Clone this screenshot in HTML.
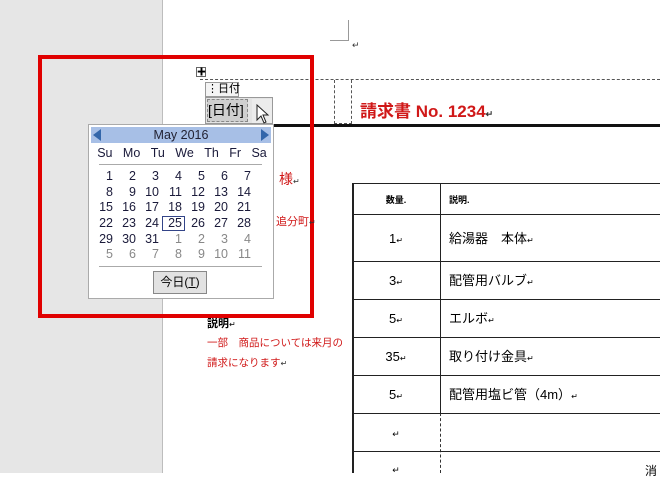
<!DOCTYPE html>
<html><head><meta charset="utf-8"><style>
*{margin:0;padding:0;box-sizing:border-box}
body{width:660px;height:473px;overflow:hidden;background:#fff;position:relative;font-family:"Liberation Sans","Noto Sans CJK JP",sans-serif}
.a{position:absolute}
.red{color:#d01818}
.cal td{width:23px;text-align:right;padding-right:3px;height:15.6px;font-size:12.5px;color:#1a1a3a;line-height:15px}
.cal .g{color:#888}
.row{position:absolute;left:352px;width:320px;border-top:1.5px solid #222}
.q{position:absolute;left:352px;width:88px;text-align:center;font-size:13px;line-height:16px}
.d{position:absolute;left:449px;font-size:13px;line-height:16px}
</style></head><body>
<div class="a" style="left:0;top:0;width:163px;height:473px;background:#e6e6e6;border-right:1px solid #bdbdbd"></div>
<div class="a" style="left:330px;top:20px;width:19px;height:21px;border-right:1px solid #999;border-bottom:1px solid #999"></div>
<div class="a" style="left:352px;top:40px;font-size:9px;color:#333">↵</div>
<div class="a" style="left:200px;top:79px;width:460px;border-top:1px dashed #555"></div>
<div class="a" style="left:334px;top:80px;width:18px;height:44px;border-left:1px dashed #555;border-right:1px dashed #555;border-bottom:1px dashed #555"></div>
<div class="a" style="left:273px;top:124px;width:387px;height:3px;background:#111"></div>
<div class="a red" style="left:360px;top:97px;font-size:17px;font-weight:bold">請求書 No. 1234<span style="font-size:9px;color:#333">↵</span></div>
<div class="a" style="left:196px;top:67px;width:10px;height:10px;border:1px solid #666;font-size:9px;line-height:8px;text-align:center">✚</div>
<div class="a" style="left:205px;top:82px;width:34px;height:15px;border:1px solid #999;background:#f4f4f4;font-size:11px;line-height:13px;padding-left:1px;white-space:nowrap;overflow:visible">⋮日付</div>
<div class="a" style="left:205px;top:97px;width:68px;height:27px;border:1px solid #999;background:#e4e4e4"></div>
<div class="a" style="left:207px;top:99px;width:41px;height:23px;background:#cfcfcf;border:1px dashed #888;font-size:14px;line-height:21px;white-space:nowrap">[日付]</div>
<div class="a" style="left:252px;top:99px;width:20px;height:24px;background:#ececec"></div>
<svg class="a" style="left:256px;top:104px" width="16" height="22"><path d="M1 1 L1 16 L5 12 L8 19 L10 18 L7 11 L12 11 Z" fill="#fff" stroke="#222"/></svg>
<div class="a" style="left:38px;top:55px;width:276px;height:263px;border:4px solid #e00000"></div>
<div class="a" style="left:88px;top:124px;width:186px;height:175px;background:#fff;border:1px solid #aaa"></div>
<div class="a" style="left:91px;top:127px;width:180px;height:16px;background:#a7bfe6;font-size:12.5px;text-align:center;line-height:16px;color:#223">May 2016</div>
<svg class="a" style="left:93px;top:129px" width="180" height="12"><path d="M0 6 L8 0 L8 12Z" fill="#3366aa"/><path d="M176 6 L168 0 L168 12Z" fill="#3366aa"/></svg>
<div class="a" style="left:92px;top:146px;width:180px;font-size:12.5px;color:#1a1a3a;display:flex;justify-content:space-around">
<span>Su</span><span>Mo</span><span>Tu</span><span>We</span><span>Th</span><span>Fr</span><span>Sa</span></div>
<div class="a" style="left:99px;top:164px;width:163px;border-top:1px solid #aaa"></div>
<table class="a cal" style="left:93px;top:169px;border-collapse:collapse">
<tr><td>1</td><td>2</td><td>3</td><td>4</td><td>5</td><td>6</td><td>7</td></tr>
<tr><td>8</td><td>9</td><td>10</td><td>11</td><td>12</td><td>13</td><td>14</td></tr>
<tr><td>15</td><td>16</td><td>17</td><td>18</td><td>19</td><td>20</td><td>21</td></tr>
<tr><td>22</td><td>23</td><td>24</td><td style="outline:1px solid #334488;outline-offset:-1px">25</td><td>26</td><td>27</td><td>28</td></tr>
<tr><td>29</td><td>30</td><td>31</td><td class="g">1</td><td class="g">2</td><td class="g">3</td><td class="g">4</td></tr>
<tr><td class="g">5</td><td class="g">6</td><td class="g">7</td><td class="g">8</td><td class="g">9</td><td class="g">10</td><td class="g">11</td></tr>
</table>
<div class="a" style="left:99px;top:266px;width:163px;border-top:1px solid #aaa"></div>
<div class="a" style="left:153px;top:271px;width:54px;height:23px;border:1px solid #888;background:#e2e2e2;font-size:12px;text-align:center;line-height:21px">今日(<u>T</u>)</div>
<div class="a red" style="left:279px;top:169px;font-size:14px">様<span style="font-size:8px;color:#333">↵</span></div>
<div class="a red" style="left:276px;top:213px;font-size:11px">追分町<span style="font-size:8px;color:#333">↵</span></div>
<div class="a" style="left:207px;top:315px;font-size:11px;font-weight:bold">説明<span style="font-size:8px;font-weight:normal">↵</span></div>
<div class="a red" style="left:207px;top:333px;font-size:10.5px;line-height:20px">一部　商品については来月の<br>請求になります<span style="font-size:8px;color:#333">↵</span></div>
<div class="a" style="left:352px;top:183px;width:1.5px;height:290px;background:#222"></div>
<div class="a" style="left:439.5px;top:183px;width:1.5px;height:230px;background:#222"></div>
<div class="a" style="left:440px;top:413px;height:60px;border-left:1px dashed #333"></div>
<div class="row" style="top:183px"></div><div class="row" style="top:214px"></div><div class="row" style="top:261px"></div>
<div class="row" style="top:299px"></div><div class="row" style="top:337px"></div><div class="row" style="top:375px"></div>
<div class="row" style="top:413px"></div><div class="row" style="top:451px"></div>
<div class="q" style="top:192px;font-size:9px;font-weight:bold">数量.</div>
<div class="d" style="top:192px;font-size:9px;font-weight:bold">説明.</div>
<div class="q" style="top:231px">1<span style="font-size:8px">↵</span></div><div class="d" style="top:231px">給湯器　本体<span style="font-size:8px">↵</span></div>
<div class="q" style="top:273px">3<span style="font-size:8px">↵</span></div><div class="d" style="top:273px">配管用バルブ<span style="font-size:8px">↵</span></div>
<div class="q" style="top:311px">5<span style="font-size:8px">↵</span></div><div class="d" style="top:311px">エルボ<span style="font-size:8px">↵</span></div>
<div class="q" style="top:349px">35<span style="font-size:8px">↵</span></div><div class="d" style="top:349px">取り付け金具<span style="font-size:8px">↵</span></div>
<div class="q" style="top:387px">5<span style="font-size:8px">↵</span></div><div class="d" style="top:387px">配管用塩ビ管（4m）<span style="font-size:8px">↵</span></div>
<div class="q" style="top:426px;font-size:9px">↵</div>
<div class="q" style="top:462px;font-size:9px">↵</div>
<div class="a" style="left:645px;top:462px;font-size:12px">消</div>
</body></html>
